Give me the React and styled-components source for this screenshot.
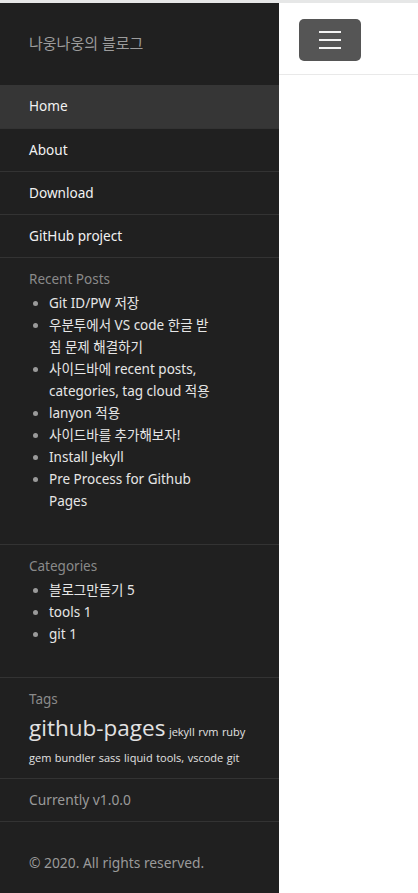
import React from "react";
import styled, { createGlobalStyle } from "styled-components";

const Global = createGlobalStyle`
  html, body { margin: 0; padding: 0; background: #fff; }
  body { font-family: "Noto Sans", "Noto Sans CJK KR", sans-serif; }
  * { box-sizing: border-box; }
`;

const Page = styled.div`
  border-top: 3px solid #e6e7e7;
  display: flex;
  min-height: 100vh;
`;

const Sidebar = styled.aside`
  width: 279px;
  flex: none;
  min-height: 890px;
  background: #202020;
  color: #dcdcdc;
  font-family: "Noto Sans", "Noto Sans CJK KR", sans-serif;
  font-size: 13.5px;
`;

const Brand = styled.div`
  height: 82px;
  padding: 0 29px 4px;
  display: flex;
  align-items: center;
  color: #9c9c9c;
  font-size: 15px;
`;

const NavItem = styled.a`
  display: flex;
  align-items: center;
  height: 43px;
  padding: 0 29px 2px;
  color: #f2f2f2;
  font-size: 13.6px;
  text-decoration: none;
  background: ${(p) => (p.$active ? "#363636" : "transparent")};
  border-top: ${(p) => (p.$first ? "none" : "1px solid #333")};
`;

const Section = styled.section`
  border-top: 1px solid #333;
  padding: ${(p) => p.$pad || "10px 29px 32px"};
`;

const Heading = styled.div`
  color: #8a8a8a;
  font-size: 13.5px;
  line-height: 22px;
  margin-bottom: 2px;
`;

const List = styled.ul`
  margin: 0;
  padding-left: 20px;
  padding-right: 30px;
  list-style: disc;
  li {
    line-height: 22px;
    font-size: 13.5px;
    color: #e6e6e6;
  }
  li::marker {
    color: #9a9a9a;
  }
`;

const Cloud = styled.div`
  display: flex;
  flex-wrap: wrap;
  align-items: baseline;
  column-gap: 3.5px;
  margin: 1px -6px 0 0;
  color: #e2e2e2;
`;

const Tag = styled.span`
  font-family: "Open Sans", "Noto Sans", sans-serif;
  font-size: ${(p) => p.$size}px;
  line-height: ${(p) => (p.$size > 14 ? "31px" : "26px")};
`;

const Muted = styled.div`
  color: #9a9a9a;
  font-size: 13.8px;
  line-height: 22px;
`;

const Main = styled.main`
  flex: 1;
`;

const TopBar = styled.header`
  height: 72px;
  border-bottom: 1px solid #e9e9e9;
  padding: 16px 20px;
`;

const Toggle = styled.button`
  width: 62px;
  height: 42px;
  border: none;
  border-radius: 5px;
  background: #555;
  display: flex;
  flex-direction: column;
  align-items: center;
  justify-content: center;
  gap: 6px;
  padding: 0;
`;

const Bar = styled.span`
  width: 22px;
  height: 2px;
  background: #f4f4f4;
`;

const posts = [
  "Git ID/PW 저장",
  "우분투에서 VS code 한글 받침 문제 해결하기",
  "사이드바에 recent posts, categories, tag cloud 적용",
  "lanyon 적용",
  "사이드바를 추가해보자!",
  "Install Jekyll",
  "Pre Process for Github Pages",
];

const cats = ["블로그만들기 5", "tools 1", "git 1"];

const tags = [
  ["github-pages", 22.5],
  ["jekyll", 11],
  ["rvm", 11],
  ["ruby", 11],
  ["gem", 11],
  ["bundler", 11],
  ["sass", 11],
  ["liquid", 11],
  ["tools,", 11],
  ["vscode", 11],
  ["git", 11],
];

export default function App() {
  return (
    <>
      <Global />
      <Page>
        <Sidebar>
          <Brand>나웅나웅의 블로그</Brand>
          <nav>
            <NavItem $active $first>Home</NavItem>
            <NavItem>About</NavItem>
            <NavItem>Download</NavItem>
            <NavItem>GitHub project</NavItem>
          </nav>
          <Section>
            <Heading>Recent Posts</Heading>
            <List>
              {posts.map((p) => (
                <li key={p}>{p}</li>
              ))}
            </List>
          </Section>
          <Section>
            <Heading>Categories</Heading>
            <List>
              {cats.map((c) => (
                <li key={c}>{c}</li>
              ))}
            </List>
          </Section>
          <Section $pad="10px 29px 7px">
            <Heading>Tags</Heading>
            <Cloud>
              {tags.map(([t, s]) => (
                <Tag key={t} $size={s}>
                  {t}
                </Tag>
              ))}
            </Cloud>
          </Section>
          <Section $pad="10px 29px 10px">
            <Muted>Currently v1.0.0</Muted>
          </Section>
          <Section $pad="30px 29px 20px">
            <Muted>© 2020. All rights reserved.</Muted>
          </Section>
        </Sidebar>
        <Main>
          <TopBar>
            <Toggle aria-label="menu">
              <Bar />
              <Bar />
              <Bar />
            </Toggle>
          </TopBar>
        </Main>
      </Page>
    </>
  );
}
